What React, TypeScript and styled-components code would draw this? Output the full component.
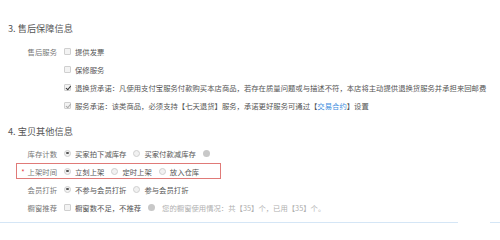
import React from 'react';
import styled, { createGlobalStyle } from 'styled-components';

const GlobalStyle = createGlobalStyle`
  html, body {
    margin: 0;
    padding: 0;
    background: #fff;
  }
  body {
    font-family: "Noto Sans CJK SC", "Liberation Sans", sans-serif;
    color: #555;
  }
`;

const Page = styled.div`
  width: 500px;
  height: 230px;
  overflow: hidden;
  padding-top: 20px;
  box-sizing: border-box;
`;

const SectionTitle = styled.div`
  padding-left: 8px;
  height: 16px;
  line-height: 16px;
  font-size: 9.2px;
  color: #555;
`;

const Rows = styled.div<{ $top: number; $bottom: number }>`
  display: flex;
  flex-direction: column;
  align-items: flex-start;
  padding-left: 16px;
  margin-top: ${(p) => p.$top}px;
  margin-bottom: ${(p) => p.$bottom}px;
`;

const Row = styled.div<{ $highlight?: boolean }>`
  display: flex;
  align-items: center;
  height: 16px;
  margin-bottom: 2px;
  border: 1px solid ${(p) => (p.$highlight ? '#e07a78' : 'transparent')};
  width: ${(p) => (p.$highlight ? '205px' : 'auto')};
  box-sizing: border-box;
  font-size: 7.35px;
  white-space: nowrap;
`;

const Label = styled.div`
  width: 40px;
  text-align: right;
  color: #777;
  flex-shrink: 0;
`;

const Star = styled.span`
  color: #e4393c;
  margin-right: 3px;
`;

const Options = styled.div`
  display: flex;
  align-items: center;
  gap: 7px;
  margin-left: 7px;
`;

const Option = styled.div`
  display: flex;
  align-items: center;
  gap: 4px;
  color: #555;
`;

const Box = styled.span<{ $checked?: boolean; $dim?: boolean }>`
  position: relative;
  width: 7px;
  height: 7px;
  border: 1px solid #cfcfcf;
  border-radius: 1px;
  background: #f3f3f3;
  box-sizing: border-box;
  flex-shrink: 0;
  &::after {
    content: '';
    display: ${(p) => (p.$checked ? 'block' : 'none')};
    position: absolute;
    left: 1.5px;
    top: 0px;
    width: 2px;
    height: 3.5px;
    border: solid ${(p) => (p.$dim ? '#aaa' : '#333')};
    border-width: 0 1.2px 1.2px 0;
    transform: rotate(40deg);
  }
`;

const Radio = styled.span<{ $checked?: boolean }>`
  position: relative;
  width: 7px;
  height: 7px;
  border: 1px solid #cfcfcf;
  border-radius: 50%;
  background: #f1f1f1;
  box-sizing: border-box;
  flex-shrink: 0;
  &::after {
    content: '';
    display: ${(p) => (p.$checked ? 'block' : 'none')};
    position: absolute;
    left: 1.2px;
    top: 1.2px;
    width: 2.6px;
    height: 2.6px;
    border-radius: 50%;
    background: #555;
  }
`;

const Help = styled.span`
  width: 7px;
  height: 7px;
  border-radius: 50%;
  background: #c8c8c8;
  flex-shrink: 0;
`;

const Hint = styled.span`
  color: #b0b0b0;
`;

const Link = styled.span`
  color: #3c8dde;
`;

const Footer = styled.div`
  display: flex;
  gap: 32px;
  margin-top: 1px;
`;

const FooterLine = styled.div<{ $w: string }>`
  height: 0;
  border-top: 1px solid #d5e6f6;
  flex: ${(p) => p.$w};
`;

export default function App() {
  return (
    <>
      <GlobalStyle />
      <Page>
        <SectionTitle>3. 售后保障信息</SectionTitle>
        <Rows $top={7} $bottom={8}>
          <Row>
            <Label>售后服务</Label>
            <Options>
              <Option><Box />提供发票</Option>
            </Options>
          </Row>
          <Row>
            <Label />
            <Options>
              <Option><Box />保修服务</Option>
            </Options>
          </Row>
          <Row>
            <Label />
            <Options>
              <Option>
                <Box $checked />
                退换货承诺：凡使用支付宝服务付款购买本店商品，若存在质量问题或与描述不符，本店将主动提供退换货服务并承担来回邮费
              </Option>
            </Options>
          </Row>
          <Row>
            <Label />
            <Options>
              <Option>
                <Box $checked $dim />
                <span>服务承诺：该类商品，必须支持【七天退货】服务，承诺更好服务可通过【<Link>交易合约</Link>】设置</span>
              </Option>
            </Options>
          </Row>
        </Rows>

        <SectionTitle>4. 宝贝其他信息</SectionTitle>
        <Rows $top={6} $bottom={5}>
          <Row>
            <Label>库存计数</Label>
            <Options>
              <Option><Radio $checked />买家拍下减库存</Option>
              <Option><Radio />买家付款减库存</Option>
              <Help />
            </Options>
          </Row>
          <Row $highlight>
            <Label><Star>*</Star>上架时间</Label>
            <Options>
              <Option><Radio $checked />立刻上架</Option>
              <Option><Radio />定时上架</Option>
              <Option><Radio />放入仓库</Option>
            </Options>
          </Row>
          <Row>
            <Label>会员打折</Label>
            <Options>
              <Option><Radio $checked />不参与会员打折</Option>
              <Option><Radio />参与会员打折</Option>
            </Options>
          </Row>
          <Row>
            <Label>橱窗推荐</Label>
            <Options>
              <Option><Box />橱窗数不足，不推荐</Option>
              <Help />
              <Hint>您的橱窗使用情况：共【35】个，已用【35】个。</Hint>
            </Options>
          </Row>
        </Rows>
        <Footer>
          <FooterLine $w="0 0 458px" />
          <FooterLine $w="1" />
        </Footer>
      </Page>
    </>
  );
}
